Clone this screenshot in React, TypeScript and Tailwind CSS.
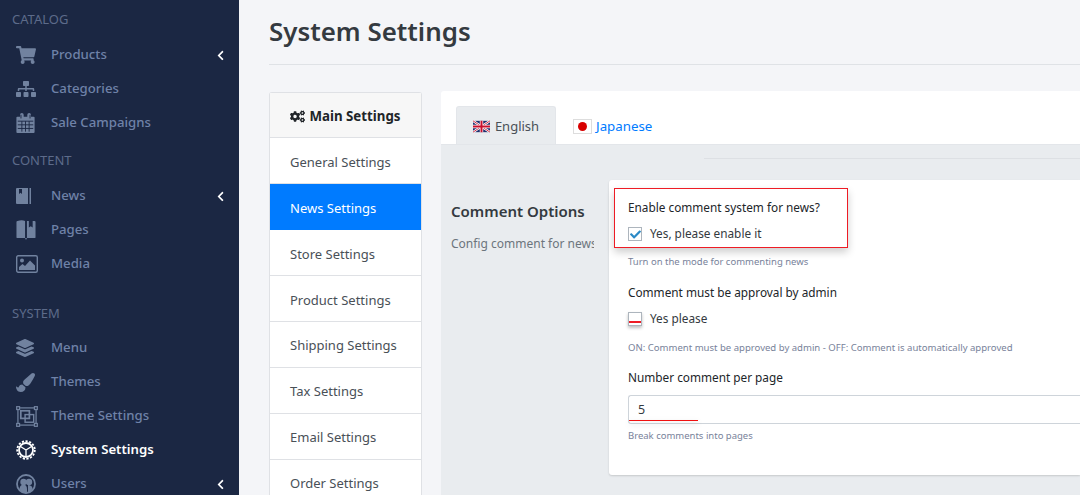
import type { ReactNode } from 'react'
import { FaShoppingCart, FaSitemap, FaLayerGroup, FaPaintBrush, FaChevronLeft, FaCheck, FaCogs } from 'react-icons/fa'

const FONT = "font-['Noto_Sans','Open_Sans',sans-serif]"

function CalendarIcon() {
  return (
    <svg viewBox="0 0 20 22" className="h-[20px] w-[19px]" fill="currentColor">
      <path d="M1 4h3V2a2 2 0 0 1 4 0v2h4V2a2 2 0 0 1 4 0v2h3a1 1 0 0 1 1 1v16a1 1 0 0 1-1 1H1a1 1 0 0 1-1-1V5a1 1 0 0 1 1-1z" />
      <path d="M5 2v4M15 2v4" stroke="#1b2743" strokeWidth="1" />
      <path d="M1.500 9h17M1.500 13h17M1.500 17h17M6 9v11.500M10 9v11.500M14 9v11.500" stroke="#1b2743" strokeWidth="1" />
    </svg>
  )
}

function BookIcon() {
  return (
    <svg viewBox="0 0 16 16" className="h-[16px] w-[16px]" fill="currentColor">
      <path d="M1 0h11v16H1a1 1 0 0 1-1-1V1a1 1 0 0 1 1-1z" />
      <path d="M13.500 0H15v16h-1.500z" />
      <path d="M3 1h3v5L4.500 4.800 3 6z" fill="#1b2743" />
    </svg>
  )
}

function PagesIcon() {
  return (
    <svg viewBox="0 0 20 21" className="h-[20px] w-[20px]" fill="currentColor">
      <path d="M1 1c3-1 6-1 8 0v18H1a1 1 0 0 1-1-1V2a1 1 0 0 1 1-1z" />
      <path d="M11 1h2v7l2-1.500L17 8V1h2a1 1 0 0 1 1 1v16a1 1 0 0 1-1 1h-8z" />
      <path d="M9 19h2l-1 2z" />
    </svg>
  )
}

function MediaIcon() {
  return (
    <svg viewBox="0 0 22 18" className="h-[18px] w-[22px]" fill="currentColor">
      <rect x="0.700" y="0.700" width="20.600" height="16.600" rx="1.500" fill="none" stroke="currentColor" strokeWidth="1.400" />
      <circle cx="6" cy="5.500" r="2" />
      <path d="M3 15v-3l3.500-3 2.500 2 5-5.500 5 5V15z" />
    </svg>
  )
}

function ThemeSettingsIcon() {
  return (
    <svg viewBox="0 0 23 22" className="h-[21px] w-[22px]" fill="none" stroke="currentColor" strokeWidth="1.300">
      <rect x="2" y="2" width="19" height="18" />
      <rect x="0.700" y="0.700" width="3" height="3" fill="#1b2743" />
      <rect x="19.300" y="0.700" width="3" height="3" fill="#1b2743" />
      <rect x="0.700" y="18.300" width="3" height="3" fill="#1b2743" />
      <rect x="19.300" y="18.300" width="3" height="3" fill="#1b2743" />
      <rect x="5" y="5" width="9" height="8" strokeWidth="1.800" />
      <rect x="9.500" y="9" width="9" height="8" strokeWidth="1.500" />
    </svg>
  )
}

function GearIcon() {
  return (
    <svg viewBox="0 0 20 20" className="h-[20px] w-[20px]" fill="none" stroke="currentColor">
      <circle cx="10" cy="10" r="7" strokeWidth="1.800" />
      <circle cx="10" cy="10" r="8.800" strokeWidth="1.800" strokeDasharray="2.200 1.500" />
      <path d="M10 10 4.500 6.500M10 10l5.500-3.500M10 10v7" strokeWidth="1.300" />
    </svg>
  )
}

function UsersIcon() {
  return (
    <svg viewBox="0 0 20 20" className="h-[20px] w-[20px]" fill="currentColor">
      <circle cx="10" cy="10" r="9" fill="none" stroke="currentColor" strokeWidth="1.800" />
      <circle cx="7.500" cy="8" r="3.200" />
      <circle cx="13" cy="8" r="3.200" />
      <path d="M3.500 15c0-3 2-4.500 4-4.500s3.500 1.500 3.500 4.500v3.500H6zM12 11c2.500 0 4.500 1 4.500 4L14 18l-2 .5z" />
    </svg>
  )
}

function Heading({ children, className }: { children: ReactNode; className: string }) {
  return <div className={`px-3 text-[13px] leading-[18px] text-[#5d6b8a] ${className}`}>{children}</div>
}

function NavItem({ icon, label, arrow, active }: { icon: ReactNode; label: string; arrow?: boolean; active?: boolean }) {
  return (
    <div className={`flex h-[34px] items-center pl-[16px] pr-[13px] text-[13.200px] ${active ? 'font-semibold text-white' : 'font-medium text-[#6f82a8]'}`}>
      <span className={`flex w-[35px] items-center ${active ? 'text-white' : 'text-[#71829f]'}`}>{icon}</span>
      <span className="flex-1">{label}</span>
      {arrow && <FaChevronLeft className="text-white" size={11} />}
    </div>
  )
}

function Sidebar() {
  return (
    <aside className="h-full w-[239px] shrink-0 overflow-hidden bg-[#1b2743] pt-[10px]">
      <Heading className="mb-[10px]">CATALOG</Heading>
      <NavItem icon={<FaShoppingCart size={20} />} label="Products" arrow />
      <NavItem icon={<FaSitemap size={20} />} label="Categories" />
      <NavItem icon={<CalendarIcon />} label="Sale Campaigns" />
      <Heading className="mb-[10px] mt-[11px]">CONTENT</Heading>
      <NavItem icon={<BookIcon />} label="News" arrow />
      <NavItem icon={<PagesIcon />} label="Pages" />
      <NavItem icon={<MediaIcon />} label="Media" />
      <Heading className="mb-[9px] mt-[23px]">SYSTEM</Heading>
      <NavItem icon={<FaLayerGroup size={18} />} label="Menu" />
      <NavItem icon={<FaPaintBrush size={19} />} label="Themes" />
      <NavItem icon={<ThemeSettingsIcon />} label="Theme Settings" />
      <NavItem icon={<GearIcon />} label="System Settings" active />
      <NavItem icon={<UsersIcon />} label="Users" arrow />
    </aside>
  )
}

const SETTINGS = ['General Settings', 'News Settings', 'Store Settings', 'Product Settings', 'Shipping Settings', 'Tax Settings', 'Email Settings', 'Order Settings']

function SettingsMenu() {
  return (
    <div className="mt-px w-[153px] shrink-0 self-start rounded-t-[3px] border border-b-0 border-[#dfe1e5] bg-white">
      <div className="flex h-[45px] items-center justify-center gap-[4px] border-b border-[#dfe1e5] bg-[#f7f7f7] pt-[3px] text-[13.300px] font-bold text-[#212529]">
        <FaCogs size={15} /> Main Settings
      </div>
      {SETTINGS.map(s => (
        <div
          key={s}
          className={`flex h-[45.950px] items-center whitespace-nowrap px-[20px] pt-[4px] text-[13px] ${s === 'News Settings' ? 'bg-[#007bff] text-white' : 'border-b border-[#dfe1e5] text-[#495057]'}`}
        >
          {s}
        </div>
      ))}
    </div>
  )
}

function UkFlag() {
  return (
    <svg viewBox="0 0 60 40" className="h-[13px] w-[17px]">
      <rect width="60" height="40" fill="#1f2f6e" />
      <path d="M0 0l60 40M60 0L0 40" stroke="#fff" strokeWidth="8" />
      <path d="M0 0l60 40M60 0L0 40" stroke="#c8102e" strokeWidth="3" />
      <path d="M30 0v40M0 20h60" stroke="#fff" strokeWidth="12" />
      <path d="M30 0v40M0 20h60" stroke="#c8102e" strokeWidth="7" />
    </svg>
  )
}

function JpFlag() {
  return (
    <span className="flex h-[15px] w-[19px] items-center justify-center border border-[#ddd] bg-white">
      <span className="h-[9px] w-[9px] rounded-full bg-[#d80000]" />
    </span>
  )
}

function CommentCard() {
  return (
    <div className="relative h-[295px] flex-1 rounded-l-[3px] bg-white pl-[19px] pt-[18px] text-[11.800px] shadow-[0_1px_2px_rgba(0,0,0,0.15)]">
      {/* red annotation box */}
      <div className="absolute left-[5px] top-[8px] h-[60px] w-[234px] border border-[#ee1c25] shadow-[0_4px_8px_rgba(0,0,0,0.2)]" />
      <div className="leading-[18px] text-[#212529]">Enable comment system for news?</div>
      <div className="mt-[9px] flex h-[18px] items-center gap-[8px] text-[#343a40]">
        <span className="flex h-[14px] w-[14px] items-center justify-center border border-[#adb5bd] bg-white text-[#2b8ac6]">
          <FaCheck size={11} />
        </span>
        Yes, please enable it
      </div>
      <div className="mt-[12px] text-[9.500px] leading-[14px] text-[#78829a]">Turn on the mode for commenting news</div>
      <div className="mt-[14px] leading-[18px] text-[#212529]">Comment must be approval by admin</div>
      <div className="mt-[9px] flex h-[18px] items-center gap-[8px] text-[#343a40]">
        <span className="flex h-[14px] w-[14px] items-end border border-[#adb5bd] bg-white pb-[2px] shadow-[0_2px_3px_rgba(0,0,0,0.25)]">
          <span className="h-[2px] w-full bg-[#ee1c25]" />
        </span>
        Yes please
      </div>
      <div className="mt-[13px] text-[9.550px] leading-[14px] text-[#78829a]">ON: Comment must be approved by admin - OFF: Comment is automatically approved</div>
      <div className="mt-[13px] leading-[18px] text-[#212529]">Number comment per page</div>
      <div className="relative mt-[9px] flex h-[29px] items-center rounded-l-[3px] border border-r-0 border-[#ced4da] pl-[9px] pt-[2px] text-[12.500px] text-[#343a40]">
        5
        <span className="absolute bottom-[2px] left-0 h-[1px] w-[69px] bg-[#f01010] shadow-[0_3px_6px_rgba(0,0,0,0.25)]" />
      </div>
      <div className="mt-[5px] text-[9.500px] leading-[14px] text-[#78829a]">Break comments into pages</div>
    </div>
  )
}

function ContentPanel() {
  return (
    <div className="flex h-[404px] flex-1 flex-col rounded-tl-[3px] bg-white">
      <div className="flex h-[54px] items-end border-b border-[#e3e6ea] pl-[15px]">
        <div className="flex h-[38px] w-[100px] items-center justify-center gap-[5px] rounded-t-[3px] border border-b-0 border-[#e3e6ea] bg-[#e9ecef] pt-[2px] text-[13px] text-[#495057]">
          <UkFlag /> English
        </div>
        <div className="flex h-[38px] items-center gap-[4px] pl-[17px] pt-[3px] text-[13.300px] text-[#007bff]">
          <JpFlag /> Japanese
        </div>
      </div>
      <div className="flex flex-1 bg-[#e9ecef]">
        <div className="mr-[15px] w-[153px] shrink-0 overflow-hidden pl-[10px] pt-[54px]">
          <div className="text-[15px] font-semibold leading-[24px] text-[#343a40]">Comment Options</div>
          <div className="mt-[12px] whitespace-nowrap text-[12px] leading-[18px] text-[#6c757d]">Config comment for news</div>
        </div>
        <div className="flex flex-1 flex-col">
          <div className="ml-[95px] mt-[13px] h-px bg-[#dde0e4]" />
          <div className="mt-[21px] flex">
            <CommentCard />
          </div>
        </div>
      </div>
    </div>
  )
}

export default function App() {
  return (
    <div className={`flex h-[495px] w-[1080px] overflow-hidden bg-[#f4f5f8] ${FONT}`}>
      <Sidebar />
      <main className="min-w-0 flex-1 pl-[30px]">
        <h1 className="flex h-[65px] items-center border-b border-[#dfe2e6] pb-[2px] text-[25.900px] font-semibold text-[#343a40]">System Settings</h1>
        <div className="mt-[26px] flex gap-[19px]">
          <SettingsMenu />
          <ContentPanel />
        </div>
      </main>
    </div>
  )
}
